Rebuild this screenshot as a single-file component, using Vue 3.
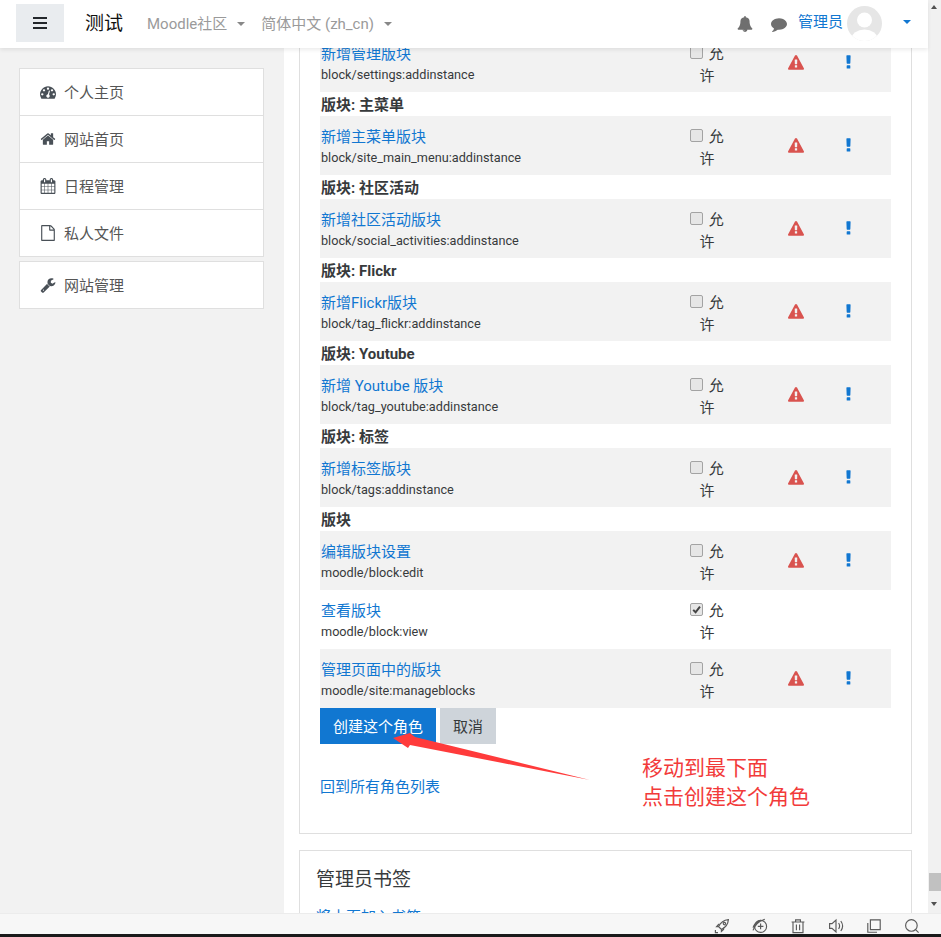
<script setup>
const icons = {
  dashboard: 'M384 1152q0-53-37.5-90.5t-90.5-37.5-90.5 37.5-37.5 90.5 37.5 90.5 90.5 37.5 90.5-37.5 37.5-90.5zm192-448q0-53-37.5-90.5t-90.5-37.5-90.5 37.5-37.5 90.5 37.5 90.5 90.5 37.5 90.5-37.5 37.5-90.5zm428 481l101-382q6-26-7.5-48.5t-38.5-29.5-48 6.5-30 39.5l-101 382q-60 5-107 43.5t-63 98.5q-20 77 20 146t117 89 146-20 89-117q16-60-6-117t-72-91zm660-33q0-53-37.5-90.5t-90.5-37.5-90.5 37.5-37.5 90.5 37.5 90.5 90.5 37.5 90.5-37.5 37.5-90.5zm-640-640q0-53-37.5-90.5t-90.5-37.5-90.5 37.5-37.5 90.5 37.5 90.5 90.5 37.5 90.5-37.5 37.5-90.5zm448 192q0-53-37.5-90.5t-90.5-37.5-90.5 37.5-37.5 90.5 37.5 90.5 90.5 37.5 90.5-37.5 37.5-90.5zm320 448q0 261-141 483-19 29-54 29h-1402q-35 0-54-29-141-221-141-483 0-182 71-348t191-286 286-191 348-71 348 71 286 191 191 286 71 348z',
  home: 'M1472 992v480q0 26-19 45t-45 19h-384v-384h-256v384h-384q-26 0-45-19t-19-45v-480q0-1 .5-3t.5-3l575-474 575 474q1 2 1 6zm223-69l-62 74q-8 9-21 11h-3q-13 0-21-7l-692-577-692 577q-12 8-24 7-13-2-21-11l-62-74q-8-10-7-23.5t11-21.5l719-599q32-26 76-26t76 26l244 204v-195q0-14 9-23t23-9h192q14 0 23 9t9 23v408l219 182q10 8 11 21.5t-7 23.5z',
  calendar: 'M192 1664h288v-288h-288v288zm352 0h320v-288h-320v288zm-352-352h288v-320h-288v320zm352 0h320v-320h-320v320zm-352-384h288v-288h-288v288zm736 736h320v-288h-320v288zm-384-736h320v-288h-320v288zm768 736h288v-288h-288v288zm-384-352h320v-320h-320v320zm-352-864v-288q0-13-9.5-22.5t-22.5-9.5h-64q-13 0-22.5 9.5t-9.5 22.5v288q0 13 9.5 22.5t22.5 9.5h64q13 0 22.5-9.5t9.5-22.5zm736 864h288v-320h-288v320zm-384-384h320v-288h-320v288zm384 0h288v-288h-288v288zm32-480v-288q0-13-9.5-22.5t-22.5-9.5h-64q-13 0-22.5 9.5t-9.5 22.5v288q0 13 9.5 22.5t22.5 9.5h64q13 0 22.5-9.5t9.5-22.5zm384-64v1280q0 52-38 90t-90 38h-1408q-52 0-90-38t-38-90v-1280q0-52 38-90t90-38h128v-96q0-66 47-113t113-47h64q66 0 113 47t47 113v96h384v-96q0-66 47-113t113-47h64q66 0 113 47t47 113v96h128q52 0 90 38t38 90z',
  file: 'M1596 380q28 28 48 76t20 88v1152q0 40-28 68t-68 28h-1344q-40 0-68-28t-28-68v-1600q0-40 28-68t68-28h896q40 0 88 20t76 48zm-444-244v376h376q-10-29-22-41l-313-313q-12-12-41-22zm384 1528v-1024h-416q-40 0-68-28t-28-68v-416h-768v1536h1280z',
  wrench: 'M448 1472q0-26-19-45t-45-19-45 19-19 45 19 45 45 19 45-19 19-45zm644-420l-682 682q-37 37-90 37-52 0-91-37l-106-108q-38-36-38-90 0-53 38-91l681-681q39 98 114.5 173.5t173.5 114.5zm634-435q0 39-23 106-47 134-164.5 217.5t-258.5 83.5q-185 0-316.5-131.5t-131.5-316.5 131.5-316.5 316.5-131.5q58 0 121.5 16.5t107.5 46.5q16 11 16 28t-16 28l-293 169v224l193 107q5-3 79-48.5t135.5-81 70.5-35.5q15 0 23.5 10t8.5 25z',
  bell: 'M912 1696q0-16-16-16-59 0-101.5-42.5t-42.5-101.5q0-16-16-16t-16 16q0 73 51.5 124.5t124.5 51.5q16 0 16-16zm816-288q0 52-38 90t-90 38h-448q0 106-75 181t-181 75-181-75-75-181h-448q-52 0-90-38t-38-90q50-42 91-88t85-119.5 74.5-158.5 50-206 19.5-260q0-152 117-282.5t307-158.5q-8-19-8-39 0-40 28-68t68-28 68 28 28 68q0 20-8 39 190 28 307 158.5t117 282.5q0 139 19.5 260t50 206 74.5 158.5 85 119.5 91 88z',
  comment: 'M1792 896q0 174-120 321.5t-326 233-450 85.5q-70 0-145-8-198 175-460 242-49 14-114 22-17 2-30.5-9t-17.5-29v-1q-3-4-.5-12t2-10 4.5-9.5l6-9 7-8.5 8-9q7-8 31-34.5t34.5-38 31-39.5 32.5-51 27-59 26-76q-157-89-247.5-220t-90.5-281q0-130 71-248.5t191-204.5 286-136.5 348-50.5q244 0 450 85.5t326 233 120 321.5z',
  warning: 'M1024 1375v-190q0-14-9.5-23.5t-22.5-9.5h-192q-13 0-22.5 9.5t-9.5 23.5v190q0 14 9.5 23.5t22.5 9.5h192q13 0 22.5-9.5t9.5-23.5zm-2-374l18-459q0-12-10-19-13-11-24-11h-220q-11 0-24 11-10 7-10 21l17 457q0 10 10 16.5t24 6.5h185q14 0 23.5-6.5t10.5-16.5zm-14-934l768 1408q35 63-2 126-17 29-46.5 46t-63.5 17h-1536q-34 0-63.5-17t-46.5-46q-37-63-2-126l768-1408q17-31 47-49t65-18 65 18 47 49z',
  exclamation: 'M1088 1248v224q0 26-19 45t-45 19h-256q-26 0-45-19t-19-45v-224q0-26 19-45t45-19h256q26 0 45 19t19 45zm30-1056l-28 768q-1 26-20.5 45t-45.5 19h-256q-26 0-45.5-19t-20.5-45l-28-768q-1-26 17.5-45t44.5-19h320q26 0 44.5 19t17.5 45z'
}

const navGroups = [
  [
    { label: '个人主页', icon: 'dashboard' },
    { label: '网站首页', icon: 'home' },
    { label: '日程管理', icon: 'calendar' },
    { label: '私人文件', icon: 'file' }
  ],
  [{ label: '网站管理', icon: 'wrench' }]
]

const rows = [
  { name: '新增管理版块', cap: 'block/settings:addinstance', shaded: true, risk: true },
  { section: '版块: 主菜单' },
  { name: '新增主菜单版块', cap: 'block/site_main_menu:addinstance', shaded: true, risk: true },
  { section: '版块: 社区活动' },
  { name: '新增社区活动版块', cap: 'block/social_activities:addinstance', shaded: true, risk: true },
  { section: '版块: Flickr' },
  { name: '新增Flickr版块', cap: 'block/tag_flickr:addinstance', shaded: true, risk: true },
  { section: '版块: Youtube' },
  { name: '新增 Youtube 版块', cap: 'block/tag_youtube:addinstance', shaded: true, risk: true },
  { section: '版块: 标签' },
  { name: '新增标签版块', cap: 'block/tags:addinstance', shaded: true, risk: true },
  { section: '版块' },
  { name: '编辑版块设置', cap: 'moodle/block:edit', shaded: true, risk: true },
  { name: '查看版块', cap: 'moodle/block:view', checked: true },
  { name: '管理页面中的版块', cap: 'moodle/site:manageblocks', shaded: true, risk: true }
]
</script>

<template>
  <div class="app">
    <div class="window">
      <div class="page">
        <header class="navbar">
          <button class="burger" aria-label="menu"><span></span><span></span><span></span></button>
          <span class="brand">测试</span>
          <span class="nav-link moodle">Moodle社区<i class="caret"></i></span>
          <span class="nav-link lang">简体中文 (zh_cn)<i class="caret"></i></span>
          <div class="nav-right">
            <svg class="nav-icon bell" viewBox="0 0 1792 1792"><path :d="icons.bell" /></svg>
            <svg class="nav-icon comment" viewBox="0 0 1792 1792"><path :d="icons.comment" /></svg>
            <span class="user">管理员</span>
            <svg class="avatar" viewBox="0 0 35 35">
              <defs><clipPath id="avatar-clip"><circle cx="17.5" cy="17.5" r="17.5" /></clipPath></defs>
              <circle cx="17.5" cy="17.5" r="17.5" fill="#e6e6e6" />
              <g clip-path="url(#avatar-clip)" fill="#fff">
                <circle cx="17.5" cy="14" r="7.5" />
                <ellipse cx="17.5" cy="33" rx="13" ry="9.5" />
              </g>
            </svg>
            <i class="caret blue"></i>
          </div>
        </header>

        <div class="body">
          <aside class="sidebar">
            <nav v-for="(group, g) in navGroups" :key="g" class="nav-group">
              <a v-for="item in group" :key="item.label" class="nav-item">
                <svg class="side-icon" viewBox="0 0 1792 1792"><path :d="icons[item.icon]" /></svg>
                <span class="nav-text">{{ item.label }}</span>
              </a>
            </nav>
          </aside>

          <main class="main">
            <section class="card role-card">
              <template v-for="(row, i) in rows" :key="i">
                <div v-if="row.section" class="section-row">{{ row.section }}</div>
                <div v-else class="cap-row" :class="{ shaded: row.shaded }">
                  <div class="cap-name">
                    <a class="link">{{ row.name }}</a>
                    <small>{{ row.cap }}</small>
                  </div>
                  <label class="perm">
                    <span class="check" :class="{ on: row.checked }">
                      <svg v-if="row.checked" viewBox="0 0 12 12"><path d="M2.4 6.4 L5 9 L9.8 2.8" fill="none" stroke="#444" stroke-width="2.2" /></svg>
                    </span>
                    允许
                  </label>
                  <div class="risk warn-cell">
                    <svg v-if="row.risk" class="warn" viewBox="0 0 1792 1792"><path :d="icons.warning" /></svg>
                  </div>
                  <div class="risk">
                    <svg v-if="row.risk" class="excl" viewBox="0 0 1792 1792"><path :d="icons.exclamation" /></svg>
                  </div>
                </div>
              </template>
              <div class="actions">
                <button class="btn primary">创建这个角色</button>
                <button class="btn secondary">取消</button>
              </div>
              <a class="link back">回到所有角色列表</a>
            </section>

            <section class="card bookmarks">
              <h3>管理员书签</h3>
              <a class="link">将本页加入书签</a>
            </section>
          </main>
        </div>
      </div>

      <div class="scrollbar">
        <i class="arrow up"></i>
        <i class="thumb"></i>
        <i class="arrow down"></i>
      </div>
    </div>

    <footer class="toolbar">
      <svg viewBox="0 0 16 16"><path d="M6 10 L4.6 8.6 C6.5 4.5 9.5 2 14.4 1.6 C14 6.5 11.5 9.5 7.4 11.4 Z M4.6 8.6 L2.6 8.6 L4.6 6.4 L6.4 6.2 M7.4 11.4 L7.4 13.4 L9.6 11.4 L9.8 9.6 M1.4 12 L1.4 14.6 L4 14.6" /><circle cx="10.4" cy="5.6" r="1.2" /></svg>
      <svg viewBox="0 0 16 16"><circle cx="8.6" cy="8.4" r="6" /><path d="M8.6 5.6 V11.2 M5.8 8.4 H11.4 M1 12.4 C3 6.5 7 3 12.8 1.4 M1 9.6 C2.5 6 5 3.5 8.6 2.4" /></svg>
      <svg viewBox="0 0 16 16"><path d="M1.6 4 H14.4 M5.6 4 V1.8 H10.4 V4 M3 4 V14.6 H13 V4 M6.4 6.6 V12.2 M9.6 6.6 V12.2" /></svg>
      <svg viewBox="0 0 16 16"><path d="M1.6 5.6 H4 L8 2 V14 L4 10.4 H1.6 Z M10.6 5 C11.8 6.8 11.8 9.2 10.6 11 M12.8 3 C15 6 15 10 12.8 13" /></svg>
      <svg viewBox="0 0 16 16"><path d="M4.4 1.8 H14.2 V11.6 H4.4 Z M1.8 5 V14.2 H11" /></svg>
      <svg viewBox="0 0 16 16"><circle cx="7.4" cy="7.4" r="5.8" /><path d="M11.6 11.6 L14.6 14.6" /></svg>
    </footer>
    <div class="taskbar"></div>

    <svg class="arrow-note" viewBox="0 0 941 937">
      <polygon points="393,738 410,733 415,737 590,780 410,745 408,748" fill="#ff3b3b" />
    </svg>
    <div class="note">移动到最下面<br />点击创建这个角色</div>
  </div>
</template>

<style>
html,
body {
  margin: 0;
  background: #fff;
}
</style>

<style scoped>
.app {
  position: relative;
  width: 941px;
  height: 937px;
  overflow: hidden;
  display: flex;
  flex-direction: column;
  font-family: Roboto, "Noto Sans CJK SC", sans-serif;
  font-size: 15px;
  line-height: 22.5px;
  color: #373a3c;
}

.window {
  flex: 1;
  min-height: 0;
  display: flex;
}

.page {
  flex: 1;
  min-width: 0;
  display: flex;
  flex-direction: column;
}

.navbar {
  position: relative;
  z-index: 2;
  height: 48px;
  flex: none;
  display: flex;
  align-items: center;
  background: #fff;
  box-shadow: 0 2px 4px rgba(0, 0, 0, 0.08);
}

.burger {
  width: 48px;
  height: 38px;
  margin: -2px 0 0 16px;
  padding: 0;
  border: 0;
  background: #e9ecef;
  display: flex;
  flex-direction: column;
  align-items: center;
  justify-content: center;
  gap: 3px;
}

.burger span {
  width: 14px;
  height: 2px;
  background: #23272b;
}

.brand {
  margin-left: 21px;
  font-size: 19px;
  color: #111;
}

.nav-link {
  color: #9a9a9a;
  display: flex;
  align-items: center;
}

.moodle {
  margin-left: 24px;
}

.lang {
  margin-left: 16px;
}

.caret {
  display: inline-block;
  margin-left: 10px;
  border-top: 4px solid #888;
  border-left: 4px solid transparent;
  border-right: 4px solid transparent;
}

.nav-right {
  margin-left: auto;
  display: flex;
  align-items: center;
}

.nav-icon {
  fill: #6f6f6f;
  width: 16px;
  height: 16px;
}

.bell {
  margin-right: 18px;
}

.comment {
  margin-right: 11px;
}

.user {
  color: #1177d1;
  margin-top: -4px;
}

.avatar {
  width: 35px;
  height: 35px;
  margin: 0 0 2px 4px;
}

.caret.blue {
  margin: -5px 17px 0 21px;
  border-top-color: #1177d1;
}

.body {
  flex: 1;
  min-height: 0;
  overflow: hidden;
  display: flex;
}

.sidebar {
  width: 284px;
  flex: none;
  box-sizing: border-box;
  padding: 20px 20px 0 19px;
  background: #f2f2f2;
}

.nav-group {
  display: flex;
  flex-direction: column;
  margin-bottom: 4px;
  background: #fff;
  border: 1px solid #dfdfdf;
}

.nav-item {
  height: 46px;
  display: flex;
  align-items: center;
  padding-left: 20px;
  color: #555;
}

.nav-item + .nav-item {
  border-top: 1px solid #dfdfdf;
}

.nav-text {
  padding-top: 2px;
}

.side-icon {
  width: 16px;
  height: 16px;
  margin-right: 8px;
  fill: #495057;
}

.main {
  flex: 1;
  min-width: 0;
  padding: 0 16px 0 15px;
}

.card {
  background: #fff;
  border: 1px solid #dfdfdf;
}

.role-card {
  margin-top: -40px;
  padding: 24px 20px 35px 20px;
}

.section-row {
  height: 24px;
  padding-left: 1px;
  font-weight: 700;
  line-height: 27px;
}

.cap-row {
  height: 59px;
  display: grid;
  grid-template-columns: 367px 40px 95px 52px 1fr;
  background: #fff;
}

.cap-row.shaded {
  background: #f2f2f2;
}

.cap-name {
  padding: 10px 0 0 1px;
  display: flex;
  flex-direction: column;
}

.cap-name small {
  margin-top: -1px;
  font-size: 12.7px;
  line-height: 20px;
  color: #373a3c;
}

.link {
  color: #1177d1;
}

.perm {
  display: block;
  padding-top: 10px;
  text-align: center;
  line-height: 22px;
  font-size: 15px;
}

.check {
  display: inline-block;
  width: 13px;
  height: 13px;
  box-sizing: border-box;
  margin-right: 2px;
  vertical-align: 0;
  border: 1px solid #a3a3a3;
  border-radius: 2px;
  background: #e6e6e6;
}

.check svg {
  display: block;
  width: 11px;
  height: 11px;
}

.risk {
  display: flex;
  align-items: center;
  justify-content: center;
}

.warn-cell {
  padding-left: 43px;
}

.warn {
  width: 16px;
  height: 16px;
  fill: #d9534f;
}

.excl {
  width: 17px;
  height: 17px;
  fill: #1177d1;
}

.actions {
  display: flex;
  gap: 4px;
}

.btn {
  height: 36px;
  border: 0;
  padding: 2px 13px 0;
  font: inherit;
}

.primary {
  background: #1177d1;
  color: #fff;
}

.secondary {
  background: #ced4da;
  color: #373a3c;
}

.back {
  display: block;
  margin-top: 32px;
  margin-bottom: -1px;
}

.bookmarks {
  margin-top: 16px;
  padding: 15px 16px 20px;
}

.bookmarks h3 {
  margin: 0 0 12px;
  font-size: 19px;
  font-weight: 400;
  line-height: 28px;
}

.bookmarks .link {
  display: block;
}

.scrollbar {
  position: relative;
  width: 13px;
  flex: none;
  background: #f1f1f1;
}

.arrow {
  position: absolute;
  left: 3px;
  border-left: 3.5px solid transparent;
  border-right: 3.5px solid transparent;
}

.arrow.up {
  top: 5px;
  border-bottom: 4px solid #505050;
}

.arrow.down {
  bottom: 7px;
  border-top: 4px solid #505050;
}

.thumb {
  position: absolute;
  left: 1px;
  right: 0;
  top: 873px;
  height: 18px;
  background: #c1c1c1;
}

.toolbar {
  height: 21px;
  flex: none;
  display: flex;
  align-items: center;
  justify-content: flex-end;
  gap: 22px;
  padding: 3px 21px 0 0;
  background: #f7f7f7;
  border-top: 1px solid #ececec;
  box-sizing: border-box;
}

.toolbar svg {
  width: 16px;
  height: 16px;
  fill: none;
  stroke: #5a5a5a;
  stroke-width: 1.15;
}

.taskbar {
  height: 3px;
  flex: none;
  background: #1a1a1a;
}

.arrow-note {
  position: absolute;
  inset: 0;
  width: 941px;
  height: 937px;
  pointer-events: none;
}

.note {
  position: absolute;
  left: 642px;
  top: 754px;
  font-size: 21px;
  line-height: 29px;
  color: #f23a3a;
}
</style>
